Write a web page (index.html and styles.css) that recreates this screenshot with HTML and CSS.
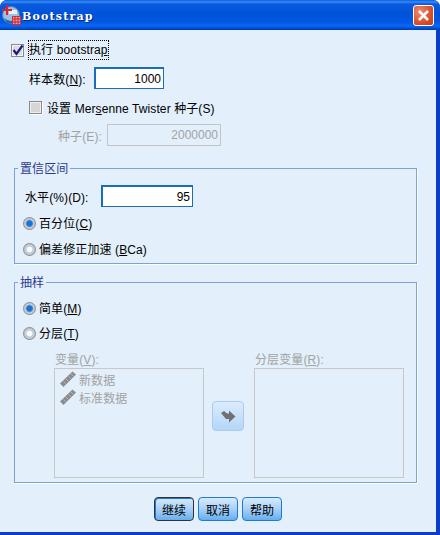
FILE: index.html
```html
<!DOCTYPE html>
<html lang="zh-CN">
<head>
  <meta charset="UTF-8" />
  <title>Bootstrap</title>
  <link rel="stylesheet" href="styles.css">
</head>
<body>
  <div class="window">
    <div class="titlebar">
      <svg class="app-icon" width="20" height="22" viewBox="0 0 20 22">
        <circle cx="9" cy="11" r="8.5" fill="#9cc0e0" stroke="#4a7cb0"/>
        <path d="M2 14 Q9 20 16 14 L14 20 L5 19 Z" fill="#2f62a8"/>
        <path d="M7 6 H15 V10 H7 Z" fill="#e8f0f8"/>
        <path d="M4 1 H6 V5 H10 V7 H6 V11 H4 V7 H0 V5 H4 Z" fill="#e0202c"/>
        <rect x="10.5" y="12.5" width="8" height="8" fill="#f4a0a0" stroke="#d0303c"/>
        <path d="M10.5 15 H18.5 M10.5 18 H18.5 M13 12.5 V20.5 M16 12.5 V20.5" stroke="#c8202c" fill="none"/>
      </svg>
      <span class="title-text">Bootstrap</span>
      <div class="close-btn">
        <svg width="13" height="13" viewBox="0 0 13 13">
          <path d="M2 2 L11 11 M11 2 L2 11" stroke="#fff" stroke-width="2.6" fill="none"/>
        </svg>
      </div>
    </div>

    <div class="client">
      <div class="row row-perform">
        <span class="check">
          <svg width="13" height="13" viewBox="0 0 13 13">
            <path d="M2.5 6 L5.5 10 L11.5 1.5" stroke="#1a1a8c" stroke-width="2.2" fill="none"/>
          </svg>
        </span>
        <span class="focus-label">执行 bootstra<u>p</u></span>
      </div>

      <div class="row row-samples">
        <span class="samples-label">样本数(<u>N</u>):</span>
        <input class="field field-samples" type="text" value="1000">
      </div>

      <div class="row row-twister">
        <span class="check check-off"></span>
        <span>设置 Mer<u>s</u>enne Twister 种子(S)</span>
      </div>

      <div class="row row-seed disabled">
        <span class="seed-label">种子(E):</span>
        <input class="field field-seed" type="text" value="2000000" disabled>
      </div>

      <fieldset class="group group-ci">
        <legend>置信区间</legend>
        <div class="row row-level">
          <span class="level-label">水平(%)(D):</span>
          <input class="field field-level" type="text" value="95">
        </div>
        <div class="row radio-row"><span class="radio on"></span><span class="radio-text">百分位(<u>C</u>)</span></div>
        <div class="row radio-row"><span class="radio"></span><span class="radio-text">偏差修正加速 (<u>B</u>Ca)</span></div>
      </fieldset>

      <fieldset class="group group-sampling">
        <legend>抽样</legend>
        <div class="row radio-row"><span class="radio on"></span><span class="radio-text">简单(<u>M</u>)</span></div>
        <div class="row radio-row radio-strat"><span class="radio"></span><span class="radio-text">分层(<u>T</u>)</span></div>
        <div class="lists disabled">
          <div class="list-col">
            <div class="list-title">变量(<u>V</u>):</div>
            <div class="listbox">
              <div class="list-item">
                <svg width="16" height="16" viewBox="0 0 16 16"><path d="M0 12.5 L12.5 0.5 L16 3.5 L3.5 16 Z" fill="#8c8c8c"/><path d="M3.5 10.5 L5.5 12.5 M6 8 L8 10 M8.5 5.5 L10.5 7.5 M11 3 L13 5" stroke="#b8b8b8" fill="none"/></svg>
                <span>新数据</span>
              </div>
              <div class="list-item">
                <svg width="16" height="16" viewBox="0 0 16 16"><path d="M0 12.5 L12.5 0.5 L16 3.5 L3.5 16 Z" fill="#8c8c8c"/><path d="M3.5 10.5 L5.5 12.5 M6 8 L8 10 M8.5 5.5 L10.5 7.5 M11 3 L13 5" stroke="#b8b8b8" fill="none"/></svg>
                <span>标准数据</span>
              </div>
            </div>
          </div>
          <div class="move-btn">
            <svg width="15" height="13" viewBox="0 0 15 13"><path d="M0 3 L3 1 L6 3.5 H8 V0.5 L14.5 6.5 L8 12.5 V9 H5 Z" fill="#707070"/></svg>
          </div>
          <div class="list-col">
            <div class="list-title">分层变量(<u>R</u>):</div>
            <div class="listbox"></div>
          </div>
        </div>
      </fieldset>

      <div class="actions">
        <button class="btn btn-default" type="button">继续</button>
        <button class="btn" type="button">取消</button>
        <button class="btn" type="button">帮助</button>
      </div>
    </div>
  </div>
</body>
</html>
```

FILE: styles.css
```css
html, body {
  margin: 0;
  padding: 0;
  background: #fff;
}
.window {
  width: 440px;
  height: 535px;
  display: flex;
  flex-direction: column;
  overflow: hidden;
  background: #0a3fc4;
  border-radius: 7px 7px 0 0;
  font-family: "Liberation Sans", "Noto Sans CJK SC", sans-serif;
  font-size: 12px;
  letter-spacing: 0.1px;
  color: #000;
}
.titlebar {
  height: 30px;
  flex: none;
  display: flex;
  align-items: center;
  box-sizing: border-box;
  padding: 0 6px 0 2px;
  background: linear-gradient(#0a5ce0 0, #3a8cf6 2px, #0a5be0 4px, #0052d8 14px, #0258e4 22px, #0a68f4 26px, #0050d8 28px, #0038b0 30px);
}
.app-icon {
  flex: none;
}
.title-text {
  margin-top: 3px;
  font-family: "DejaVu Serif", serif;
  font-weight: bold;
  font-size: 11px;
  letter-spacing: 1.2px;
  color: #fff;
  text-shadow: 1px 1px 0 #0a2a80;
}
.close-btn {
  margin-left: auto;
  width: 19px;
  height: 19px;
  display: flex;
  align-items: center;
  justify-content: center;
  border: 1px solid #fff;
  border-radius: 3px;
  background: radial-gradient(circle at 30% 30%, #ee8a70, #d8502c 60%, #c03c10);
}
.client {
  flex: none;
  width: 436px;
  height: 502px;
  box-sizing: border-box;
  background: #e3effb;
  overflow: hidden;
}
.row {
  display: flex;
  align-items: center;
  height: 20px;
}
.check {
  width: 13px;
  height: 13px;
  flex: none;
  box-sizing: border-box;
  border: 1px solid #8a8a8a;
  background: #dcdcdc;
  box-shadow: inset 0 0 0 1px #f4f4f4;
  display: flex;
  align-items: center;
  justify-content: center;
}
.check svg {
  flex: none;
}
.check-off {
  background: #d6d6d6;
  box-shadow: 1px 1px 0 #fff, inset 0 0 0 1px #eee;
}
.row-perform {
  margin-top: 10px;
  padding-left: 11px;
}
.focus-label {
  margin-left: 4px;
  padding: 0 1px;
  height: 20px;
  line-height: 21px;
  outline: 1px dotted #000;
  outline-offset: -1px;
}
.row-samples {
  margin-top: 7px;
  height: 22px;
  padding-left: 29px;
}
.samples-label {
  width: 65px;
}
.row-twister {
  margin-top: 8px;
  padding-left: 29px;
  gap: 5px;
}
.row-seed {
  margin-top: 7px;
  height: 22px;
  padding-left: 58px;
}
.seed-label {
  width: 49px;
}
.disabled {
  color: #a2a2a2;
}
.field {
  box-sizing: border-box;
  height: 22px;
  padding: 0 2px;
  border: 1px solid #1a6cbc;
  border-width: 2px 1px 1px 2px;
  border-radius: 0;
  outline: none;
  background: #fff;
  color: #000;
  text-align: right;
  font: 12px "Liberation Sans", "Noto Sans CJK SC", sans-serif;
}
.field-samples {
  width: 70px;
}
.field-seed {
  width: 114px;
  border: 1px solid #c4c4c4;
  background: #e3effb;
  color: #a2a2a2;
}
.field-level {
  width: 92px;
}
.group {
  margin: 0 0 0 14px;
  padding: 0;
  width: 403px;
  box-sizing: border-box;
  border: 1px solid #7ba3d6;
  box-shadow: 1px 1px 0 #fff;
  min-width: 0;
}
.group legend {
  margin-left: 3px;
  padding: 0 2px;
  height: 14px;
  line-height: 17px;
  color: #2b3c90;
}
.group-ci {
  margin-top: 15px;
  height: 103px;
}
.group-sampling {
  margin-top: 11px;
  height: 208px;
}
.row-level {
  margin-top: 10px;
  height: 22px;
  padding-left: 10px;
}
.level-label {
  width: 76px;
}
.radio-row {
  margin-top: 6px;
  padding-left: 8px;
  gap: 3px;
}
.radio-text {
  margin-top: -1px;
}
.group-sampling .radio-row:first-of-type {
  margin-top: 9px;
}
.radio-strat {
  margin-top: 5px;
}
.radio {
  width: 13px;
  height: 13px;
  flex: none;
  box-sizing: border-box;
  border-radius: 50%;
  background: radial-gradient(circle, #f8fbff 0 2.5px, #a8c8e8 3.5px, #d4d4d4 4.5px, #808080 6.5px);
}
.radio.on {
  background: radial-gradient(circle, #1a70d4 0 2.5px, #70a8e0 3.5px, #d8d8d8 4.5px, #808080 6.5px);
}
.lists {
  display: flex;
  margin-top: 10px;
  margin-left: 39px;
  align-items: flex-start;
}
.list-col {
  width: 150px;
  flex: none;
}
.list-title {
  height: 15px;
  line-height: 14px;
  padding-left: 1px;
}
.listbox {
  box-sizing: border-box;
  height: 110px;
  border: 1px solid #c8c8c8;
  padding: 1px 0 0 5px;
}
.list-item {
  display: flex;
  align-items: center;
  gap: 3px;
  height: 18px;
}
.move-btn {
  box-sizing: border-box;
  flex: none;
  width: 32px;
  height: 30px;
  margin: 48px 10px 0 8px;
  border: 1px solid #a8ccf0;
  border-radius: 4px;
  background: linear-gradient(#dcecfc, #b4d6f8);
  display: flex;
  align-items: center;
  justify-content: center;
}
.actions {
  display: flex;
  margin: 14px 0 0 154px;
  gap: 4px;
}
.btn {
  box-sizing: border-box;
  width: 40px;
  height: 24px;
  padding: 0;
  border: 1px solid #1a7cd8;
  border-radius: 4px;
  background: linear-gradient(#d8eafc, #a8d0f8 50%, #66aeee);
  color: #000;
  font: 12px "Liberation Sans", "Noto Sans CJK SC", sans-serif;
}
.btn-default {
  border-color: #333;
  box-shadow: inset 1px 1px 0 #1a7cd8;
}
```
